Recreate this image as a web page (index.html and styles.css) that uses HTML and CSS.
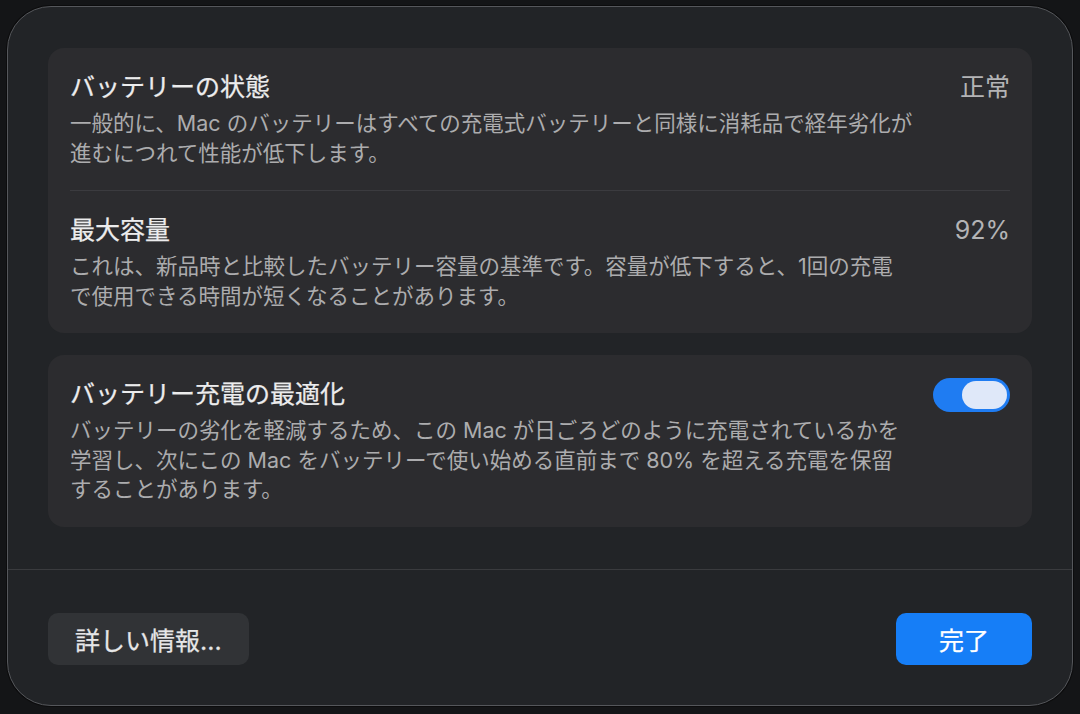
FILE: index.html
```html
<!DOCTYPE html>
<html lang="ja">
<head>
    <meta charset="UTF-8">
    <title>バッテリーの状態</title>
    <link rel="stylesheet" href="styles.css">
</head>
<body>
    <div class="sheet">
        <div class="sheet-body">
            <div class="card">
                <div class="row">
                    <div class="row-text">
                        <div class="row-title">バッテリーの状態</div>
                        <div class="row-desc">一般的に、Mac のバッテリーはすべての充電式バッテリーと同様に消耗品で経年劣化が<br>進むにつれて性能が低下します。</div>
                    </div>
                    <div class="row-value">正常</div>
                </div>
                <div class="row">
                    <div class="row-text">
                        <div class="row-title">最大容量</div>
                        <div class="row-desc">これは、新品時と比較したバッテリー容量の基準です。容量が低下すると、1回の充電<br>で使用できる時間が短くなることがあります。</div>
                    </div>
                    <div class="row-value">92%</div>
                </div>
            </div>

            <div class="card">
                <div class="row">
                    <div class="row-text">
                        <div class="row-title">バッテリー充電の最適化</div>
                        <div class="row-desc">バッテリーの劣化を軽減するため、この Mac が日ごろどのように充電されているかを<br>学習し、次にこの Mac をバッテリーで使い始める直前まで 80% を超える充電を保留<br>することがあります。</div>
                    </div>
                    <div class="toggle on">
                        <div class="toggle-knob"></div>
                    </div>
                </div>
            </div>
        </div>

        <div class="sheet-footer">
            <button class="btn btn-plain">詳しい情報...</button>
            <button class="btn btn-primary">完了</button>
        </div>
    </div>
</body>
</html>
```

FILE: styles.css
```css
* {
    margin: 0;
    padding: 0;
    box-sizing: border-box;
}

body {
    font-family: "Inter", "Noto Sans CJK JP", sans-serif;
    background: #141517;
    width: 1080px;
    height: 714px;
    padding: 6px 7px 8px 7px;
    overflow: hidden;
}

.sheet {
    width: 1066px;
    height: 700px;
    background: #222427;
    border: 1px solid #55575b;
    border-radius: 44px;
    box-shadow: 0 0 0 1px #0c0c0d;
    display: flex;
    flex-direction: column;
    overflow: hidden;
}

.sheet-body {
    padding: 41px 40px 42px;
    display: flex;
    flex-direction: column;
    gap: 22px;
}

.card {
    background: #2c2c2f;
    border-radius: 16px;
    padding: 0 22px;
}

.row {
    display: flex;
    align-items: flex-start;
    justify-content: space-between;
    gap: 20px;
    padding: 23px 0 22px;
}

.row + .row {
    border-top: 1px solid #3b3b3f;
}

.row-text {
    flex: 1;
}

.row-title {
    font-size: 25px;
    line-height: 32px;
    font-weight: 400;
    -webkit-text-stroke: 0.25px #ececed;
    color: #ececed;
    margin-bottom: 6px;
}

.row-desc {
    font-size: 21.5px;
    line-height: 29.5px;
    color: #acacae;
    white-space: nowrap;
}

.row-value {
    font-size: 25px;
    line-height: 32px;
    color: #b4b4b6;
}

.toggle {
    width: 77px;
    height: 34px;
    border-radius: 17px;
    background: #3a3a3d;
    padding: 3px;
    display: flex;
    justify-content: flex-start;
}

.toggle.on {
    background: #1f7cf2;
    justify-content: flex-end;
}

.toggle-knob {
    width: 45px;
    height: 28px;
    border-radius: 14px;
    background: #dfe8f9;
}

.sheet-footer {
    margin-top: auto;
    border-top: 1px solid #3a3b3e;
    padding: 43px 40px 40px;
    display: flex;
    justify-content: space-between;
}

.btn {
    font-family: inherit;
    font-size: 25px;
    font-weight: 400;
    -webkit-text-stroke: 0.25px currentColor;
    height: 52px;
    border: none;
    border-radius: 10px;
    padding: 0 27px;
}

.btn-plain {
    background: #313336;
    color: #e6e6e7;
}

.btn-primary {
    background: #167ef7;
    color: #ffffff;
    width: 136px;
}
```
